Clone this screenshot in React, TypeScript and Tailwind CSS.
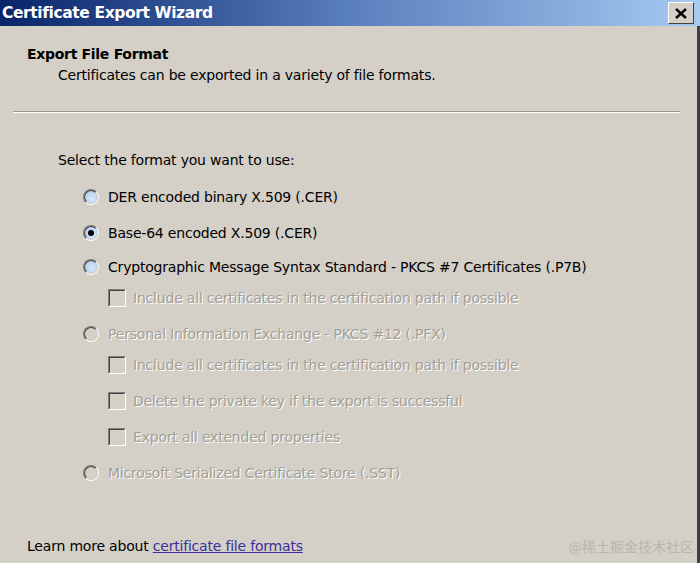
import React from "react";

const font = { fontFamily: '"DejaVu Sans", Tahoma, sans-serif' };

function Radio({ checked, disabled }: { checked?: boolean; disabled?: boolean }) {
  return (
    <span className="relative flex h-[16px] w-[16px] shrink-0 items-center justify-center rounded-full border border-t-[#808080] border-l-[#808080] border-b-white border-r-white">
      <span
        className={
          "flex h-[14px] w-[14px] items-center justify-center rounded-full border border-t-[#404040] border-l-[#404040] border-b-[#d4d0c8] border-r-[#d4d0c8] " +
          (disabled ? "bg-[#d4d0c8]" : "bg-[radial-gradient(circle_at_60%_60%,#d8e8fa,#a9c8ee)]")
        }
      >
        {checked && <span className="h-[6px] w-[6px] rounded-full bg-black" />}
      </span>
    </span>
  );
}

function Check() {
  return (
    <span className="flex h-[18px] w-[18px] shrink-0 border border-t-[#808080] border-l-[#808080] border-b-white border-r-white">
      <span className="h-full w-full border border-t-[#404040] border-l-[#404040] border-b-[#d4d0c8] border-r-[#d4d0c8]" />
    </span>
  );
}

const dim = "text-[#a29f96] [text-shadow:1px_1px_0_#ffffff]";

export default function App() {
  return (
    <div className="flex h-[563px] w-[700px] flex-col overflow-hidden bg-[#d4d0c8] text-[14px] leading-[20px] tracking-[-0.2px] text-black" style={font}>
      <div className="flex h-[26px] shrink-0 items-center justify-between bg-gradient-to-r from-[#0a246a] via-[#5a7fbd] to-[#a6caf0] pl-[2px] pr-[6px]">
        <span className="text-[15.5px] font-bold tracking-[-0.4px] text-white">Certificate Export Wizard</span>
        <span className="flex h-[22px] w-[26px] items-center justify-center border border-t-white border-l-white border-b-[#404040] border-r-[#404040] bg-[#d4d0c8]">
          <svg width="12" height="11" viewBox="0 0 12 11">
            <path d="M1 1 L11 10 M11 1 L1 10" stroke="#000" strokeWidth="2.4" />
          </svg>
        </span>
      </div>

      <div className="flex flex-1 flex-col border-r-[3px] border-r-[#404040]">
        <div className="pl-[27px] pt-[18px]">
          <div className="font-bold tracking-[-0.3px]">Export File Format</div>
          <div className="mt-[1px] pl-[31px]">Certificates can be exported in a variety of file formats.</div>
        </div>

        <div className="ml-[13px] mr-[17px] mt-[26px] border-t border-b border-t-[#9a978f] border-b-white" />

        <div className="flex flex-col pl-[58px]">
          <div className="mt-[37px]">Select the format you want to use:</div>

          <div className="mt-[17px] flex items-center gap-[9px] pl-[25px]">
            <Radio />
            <span>DER encoded binary X.509 (.CER)</span>
          </div>
          <div className="mt-[16px] flex items-center gap-[9px] pl-[25px]">
            <Radio checked />
            <span>Base-64 encoded X.509 (.CER)</span>
          </div>
          <div className="mt-[14px] flex items-center gap-[9px] pl-[25px]">
            <Radio />
            <span>Cryptographic Message Syntax Standard - PKCS #7 Certificates (.P7B)</span>
          </div>
          <div className="mt-[11px] flex items-center gap-[7px] pl-[50px]">
            <Check />
            <span className={dim}>Include all certificates in the certification path if possible</span>
          </div>
          <div className="mt-[16px] flex items-center gap-[9px] pl-[25px]">
            <Radio disabled />
            <span className={dim}>Personal Information Exchange - PKCS #12 (.PFX)</span>
          </div>
          <div className="mt-[11px] flex items-center gap-[7px] pl-[50px]">
            <Check />
            <span className={dim}>Include all certificates in the certification path if possible</span>
          </div>
          <div className="mt-[16px] flex items-center gap-[7px] pl-[50px]">
            <Check />
            <span className={dim}>Delete the private key if the export is successful</span>
          </div>
          <div className="mt-[16px] flex items-center gap-[7px] pl-[50px]">
            <Check />
            <span className={dim}>Export all extended properties</span>
          </div>
          <div className="mt-[16px] flex items-center gap-[9px] pl-[25px]">
            <Radio disabled />
            <span className={dim}>Microsoft Serialized Certificate Store (.SST)</span>
          </div>
        </div>

        <div className="mt-auto flex items-center justify-between pb-[7px] pl-[27px] pr-[3px]">
          <span>
            Learn more about <span className="text-[#3a2f9c] underline">certificate file formats</span>
          </span>
          <span className="text-[14px] tracking-normal text-[#b8b6b0]" style={{ fontFamily: '"Noto Sans CJK SC", sans-serif' }}>
            @稀土掘金技术社区
          </span>
        </div>
      </div>
    </div>
  );
}
